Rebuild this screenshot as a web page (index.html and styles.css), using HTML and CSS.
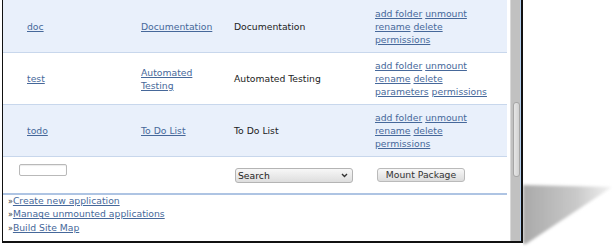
FILE: index.html
```html
<!DOCTYPE html>
<html>
<head>
    <title>Applications</title>
    <link rel="stylesheet" href="styles.css">
</head>
<body>
    <div class="stage">
        <svg class="shadow" width="92" height="67" viewBox="0 0 92 67">
            <defs>
                <linearGradient id="fade" x1="0" y1="0" x2="1" y2="0">
                    <stop offset="0" stop-color="#a9a9a9"/>
                    <stop offset="0.6" stop-color="#c9c9c9"/>
                    <stop offset="1" stop-color="#f2f2f2"/>
                </linearGradient>
                <filter id="soft" x="-10%" y="-10%" width="120%" height="120%">
                    <feGaussianBlur stdDeviation="1.6"/>
                </filter>
            </defs>
            <polygon points="0,5 89,7 3,64 0,64" fill="url(#fade)" filter="url(#soft)"/>
        </svg>

        <div class="frame">
            <div class="viewport">
                <table class="apps">
                    <colgroup>
                        <col class="c-name">
                        <col class="c-title">
                        <col class="c-desc">
                        <col class="c-actions">
                    </colgroup>
                    <tr class="odd">
                        <td class="name"><a href="#">doc</a></td>
                        <td><a href="#">Documentation</a></td>
                        <td>Documentation</td>
                        <td><a href="#">add folder</a> <a href="#">unmount</a><br><a href="#">rename</a> <a href="#">delete</a><br><a href="#">permissions</a></td>
                    </tr>
                    <tr>
                        <td class="name"><a href="#">test</a></td>
                        <td><a href="#">Automated</a><br><a href="#">Testing</a></td>
                        <td>Automated Testing</td>
                        <td><a href="#">add folder</a> <a href="#">unmount</a><br><a href="#">rename</a> <a href="#">delete</a><br><a href="#">parameters</a> <a href="#">permissions</a></td>
                    </tr>
                    <tr class="odd">
                        <td class="name"><a href="#">todo</a></td>
                        <td><a href="#">To Do List</a></td>
                        <td>To Do List</td>
                        <td><a href="#">add folder</a> <a href="#">unmount</a><br><a href="#">rename</a> <a href="#">delete</a><br><a href="#">permissions</a></td>
                    </tr>
                    <tr class="form-row">
                        <td class="name"><input class="text-input" type="text"></td>
                        <td></td>
                        <td>
                            <span class="select-wrap">
                                <select class="select"><option>Search</option></select>
                                <svg class="chevron" width="7" height="5" viewBox="0 0 7 5"><path d="M1 1 L3.5 3.5 L6 1" fill="none" stroke="#333" stroke-width="1.4"/></svg>
                            </span>
                        </td>
                        <td><button class="btn">Mount Package</button></td>
                    </tr>
                </table>

                <ul class="links">
                    <li><span class="raquo">&raquo;</span><a href="#">Create new application</a></li>
                    <li><span class="raquo">&raquo;</span><a href="#">Manage unmounted applications</a></li>
                    <li><span class="raquo">&raquo;</span><a href="#">Build Site Map</a></li>
                </ul>
            </div>
            <div class="scrollbar">
                <div class="thumb"></div>
            </div>
        </div>
    </div>
</body>
</html>
```

FILE: styles.css
```css
body {
    margin: 0;
    background-color: white;
    font-family: "DejaVu Sans", Verdana, sans-serif;
    font-size: 9.25px;
    line-height: 13px;
    color: #222;
}
.stage {
    position: relative;
    width: 614px;
    height: 247px;
    overflow: hidden;
}
.shadow {
    position: absolute;
    left: 523px;
    top: 180px;
}
.frame {
    position: relative;
    display: flex;
    width: 518px;
    height: 241px;
    margin-left: 2px;
    border-left: 1px solid #111;
    border-right: 2px solid #111;
    border-bottom: 2px solid #111;
    background-color: white;
}
.viewport {
    width: 507px;
    height: 241px;
    overflow: hidden;
}
a {
    color: #46689a;
}
.apps {
    width: 504px;
    border-collapse: collapse;
    table-layout: fixed;
    border-right: 1px solid #d3dff0;
}
.c-name { width: 138px; }
.c-title { width: 93px; }
.c-desc { width: 141px; }
.c-actions { width: 132px; }
.apps td {
    padding: 6px 8px 6px 0;
    vertical-align: middle;
    border-bottom: 1px solid #c8d7ec;
}
.apps tr:first-child td {
    padding-top: 7px;
}
.apps td.name {
    padding-left: 24px;
}
.odd {
    background-color: #e9f0fb;
}
.form-row td {
    height: 15px;
    padding: 11px 0 10px 0;
    vertical-align: top;
    border-bottom: 2px solid #aec4e3;
}
.form-row td.name {
    padding-left: 16px;
}
.text-input {
    display: block;
    box-sizing: border-box;
    width: 48px;
    height: 12px;
    margin-top: -4px;
    padding: 0;
    border: 1px solid #b9b9b9;
    border-radius: 2px;
    background-color: white;
    box-shadow: inset 0 1px 1px rgba(0,0,0,0.08);
}
.select-wrap {
    position: relative;
    display: block;
    width: 118px;
    margin-left: 1px;
}
.select {
    display: block;
    box-sizing: border-box;
    width: 118px;
    height: 15px;
    margin: 0;
    padding: 0 0 0 2px;
    -webkit-appearance: none;
    appearance: none;
    border: 1px solid #b4b4b4;
    border-radius: 3px;
    background: linear-gradient(#f7f7f7, #dedede);
    font-family: "DejaVu Sans", Verdana, sans-serif;
    font-size: 9.25px;
    line-height: 13px;
    color: #222;
}
.chevron {
    position: absolute;
    right: 5px;
    top: 5px;
}
.btn {
    display: block;
    box-sizing: border-box;
    width: 88px;
    height: 14px;
    margin-left: 2px;
    padding: 0;
    border: 1px solid #bababa;
    border-radius: 3px;
    background: linear-gradient(#f8f8f8, #dcdcdc);
    font-family: "DejaVu Sans", Verdana, sans-serif;
    font-size: 9.25px;
    line-height: 12px;
    color: #333;
}
.links {
    list-style: none;
    margin: -1px 0 0 0;
    padding: 0 0 0 5px;
}
.links li {
    height: 13.4px;
    line-height: 13px;
}
.raquo {
    font-size: 8px;
    line-height: 0;
    color: #333;
}
.scrollbar {
    box-sizing: border-box;
    width: 11px;
    padding-top: 102px;
    padding-left: 2px;
    margin-left: 3px;
    background-color: #c1c1c1;
    border-left: 1px solid #d9d9d9;
    border-right: 1px solid #b3cfee;
}
.thumb {
    box-sizing: border-box;
    width: 7px;
    height: 75px;
    border: 1px solid #a6a6a6;
    border-radius: 3px;
    background: linear-gradient(to right, #e6e6e6, #d2d2d2);
}
```
